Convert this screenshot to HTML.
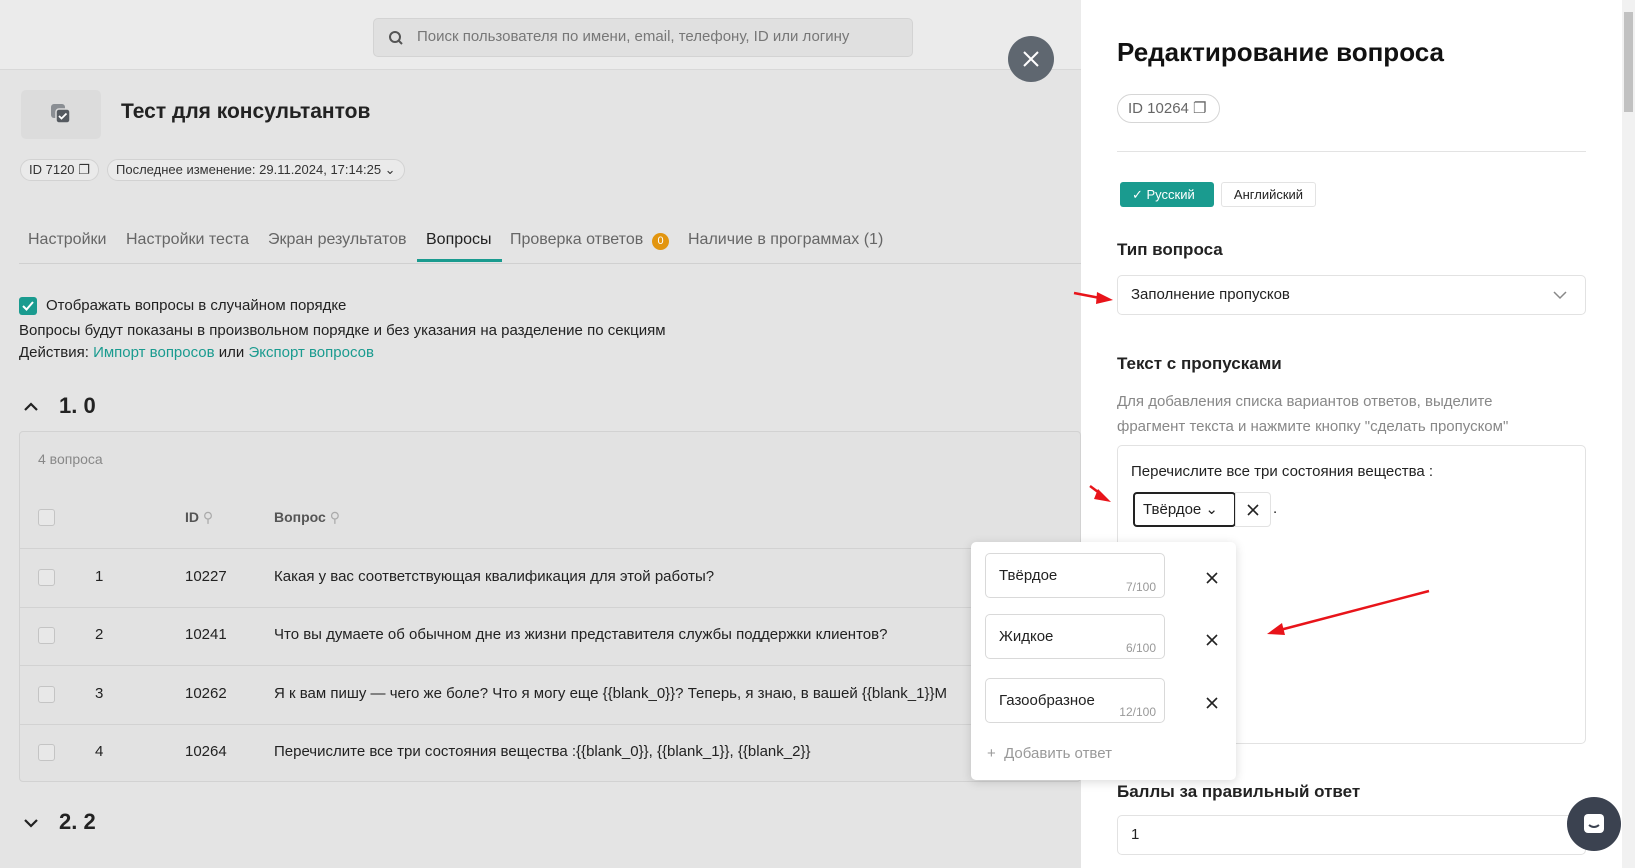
<!DOCTYPE html>
<html><head><meta charset="utf-8"><style>
*{box-sizing:border-box;margin:0;padding:0}
body{width:1635px;height:868px;overflow:hidden;position:relative;background:#e4e4e4;font-family:"Liberation Sans","DejaVu Sans",sans-serif;color:#222}
.a{position:absolute;white-space:nowrap}
.chip{position:absolute;border:1px solid #d2d2d2;border-radius:14px;background:#eaeaea;font-size:13px;color:#333;padding:0 8px;height:22px;line-height:20px}
.row{position:absolute;left:19px;width:1062px;height:58px;border-top:1px solid #d2d2d2}
.cb{position:absolute;width:17px;height:17px;border:1px solid #c4c4c4;border-radius:3px;background:#e8e8e8}
.rt{position:absolute;font-size:15px;color:#222}
.inp{position:absolute;left:985px;width:180px;height:45px;border:1px solid #d9d9d9;border-radius:5px;background:#fff}
.inp span{position:absolute;left:13px;top:13px;font-size:15px;color:#222}
.inp i{position:absolute;right:8px;bottom:3px;font-size:12px;color:#999;font-style:normal}
.x{position:absolute;font-size:18px;color:#222}
</style></head><body>
<!-- top bar -->
<div class="a" style="left:0;top:0;width:1081px;height:70px;background:#ebebeb;border-bottom:1px solid #d8d8d8"></div>
<div class="a" style="left:373px;top:18px;width:540px;height:39px;background:#e0e0e0;border:1px solid #d3d3d3;border-radius:5px"></div>
<svg class="a" style="left:388px;top:30px" width="16" height="16" viewBox="0 0 16 16"><circle cx="7" cy="7" r="5" fill="none" stroke="#555" stroke-width="2"/><path d="M11 11l3 3" stroke="#555" stroke-width="2"/></svg>
<div class="a" style="left:417px;top:28px;font-size:15px;color:#777">Поиск пользователя по имени, email, телефону, ID или логину</div>
<div class="a" style="left:1008px;top:36px;width:46px;height:46px;border-radius:50%;background:#5f6770"></div>
<svg class="a" style="left:1022px;top:50px" width="18" height="18" viewBox="0 0 18 18"><path d="M2 2l14 14M16 2L2 16" stroke="#fff" stroke-width="2"/></svg>
<!-- header -->
<div class="a" style="left:21px;top:90px;width:80px;height:49px;background:#dcdcdc;border-radius:5px"></div>
<svg class="a" style="left:49px;top:102px" width="24" height="24" viewBox="0 0 24 24"><rect x="2" y="2" width="14" height="14" rx="3" fill="#8a8e93"/><rect x="7" y="7" width="14" height="14" rx="3" fill="#555a60" stroke="#dcdcdc" stroke-width="1.5"/><path d="M10 14l2.5 2.5 5-5" stroke="#fff" stroke-width="1.8" fill="none"/></svg>
<div class="a" style="left:121px;top:100px;font-size:21px;font-weight:bold;color:#222">Тест для консультантов</div>
<div class="chip" style="left:20px;top:159px">ID 7120 ❐</div>
<div class="chip" style="left:107px;top:159px">Последнее изменение: 29.11.2024, 17:14:25 ⌄</div>
<!-- tabs -->
<div class="a" style="left:19px;top:263px;width:1062px;height:1px;background:#d0d0d0"></div>
<div class="a" style="left:28px;top:231px;font-size:16px;color:#666">Настройки</div>
<div class="a" style="left:126px;top:231px;font-size:16px;color:#666">Настройки теста</div>
<div class="a" style="left:268px;top:231px;font-size:16px;color:#666">Экран результатов</div>
<div class="a" style="left:426px;top:231px;font-size:16px;color:#222">Вопросы</div>
<div class="a" style="left:417px;top:259px;width:85px;height:3px;background:#1a9b8f"></div>
<div class="a" style="left:510px;top:231px;font-size:16px;color:#666">Проверка ответов</div>
<div class="a" style="left:652px;top:233px;width:17px;height:17px;border-radius:50%;background:#e2950f;color:#fff;font-size:11px;text-align:center;line-height:17px">0</div>
<div class="a" style="left:688px;top:231px;font-size:16px;color:#666">Наличие в программах (1)</div>
<!-- options -->
<div class="a" style="left:19px;top:297px;width:18px;height:18px;border-radius:3px;background:#1a9b8f"></div>
<svg class="a" style="left:21px;top:299px" width="14" height="14" viewBox="0 0 14 14"><path d="M2 7l3.5 3.5L12 3" stroke="#fff" stroke-width="2" fill="none"/></svg>
<div class="a" style="left:46px;top:297px;font-size:15px">Отображать вопросы в случайном порядке</div>
<div class="a" style="left:19px;top:322px;font-size:15px">Вопросы будут показаны в произвольном порядке и без указания на разделение по секциям</div>
<div class="a" style="left:19px;top:344px;font-size:15px">Действия: <span style="color:#1a9b8f">Импорт вопросов</span> или <span style="color:#1a9b8f">Экспорт вопросов</span></div>
<svg class="a" style="left:23px;top:400px" width="16" height="12" viewBox="0 0 16 12"><path d="M2 10l6-6 6 6" stroke="#222" stroke-width="2.2" fill="none"/></svg>
<div class="a" style="left:59px;top:393px;font-size:22px;font-weight:bold">1. 0</div>
<!-- table -->
<div class="a" style="left:19px;top:431px;width:1062px;height:351px;border:1px solid #d2d2d2;border-radius:4px;background:#e2e2e2"></div>
<div class="a" style="left:38px;top:451px;font-size:14px;color:#888">4 вопроса</div>
<div class="cb" style="left:38px;top:509px"></div>
<div class="a" style="left:185px;top:509px;font-size:14px;font-weight:bold;color:#555">ID <span style="color:#aaa;font-weight:normal">⚲</span></div>
<div class="a" style="left:274px;top:509px;font-size:14px;font-weight:bold;color:#555">Вопрос <span style="color:#aaa;font-weight:normal">⚲</span></div>
<div class="row" style="top:548px"></div><div class="row" style="top:607px"></div><div class="row" style="top:665px"></div><div class="row" style="top:724px;height:0"></div>
<div class="cb" style="left:38px;top:569px"></div><div class="rt" style="left:95px;top:568px">1</div><div class="rt" style="left:185px;top:568px">10227</div><div class="rt" style="left:274px;top:568px">Какая у вас соответствующая квалификация для этой работы?</div>
<div class="cb" style="left:38px;top:627px"></div><div class="rt" style="left:95px;top:626px">2</div><div class="rt" style="left:185px;top:626px">10241</div><div class="rt" style="left:274px;top:626px">Что вы думаете об обычном дне из жизни представителя службы поддержки клиентов?</div>
<div class="cb" style="left:38px;top:686px"></div><div class="rt" style="left:95px;top:685px">3</div><div class="rt" style="left:185px;top:685px">10262</div><div class="rt" style="left:274px;top:685px">Я к вам пишу — чего же боле? Что я могу еще {{blank_0}}? Теперь, я знаю, в вашей {{blank_1}}М</div>
<div class="cb" style="left:38px;top:744px"></div><div class="rt" style="left:95px;top:743px">4</div><div class="rt" style="left:185px;top:743px">10264</div><div class="rt" style="left:274px;top:743px">Перечислите все три состояния вещества :{{blank_0}}, {{blank_1}}, {{blank_2}}</div>
<svg class="a" style="left:23px;top:818px" width="16" height="12" viewBox="0 0 16 12"><path d="M2 2l6 6 6-6" stroke="#222" stroke-width="2.2" fill="none"/></svg>
<div class="a" style="left:59px;top:809px;font-size:22px;font-weight:bold">2. 2</div>
<!-- right panel -->
<div class="a" style="left:1081px;top:0;width:541px;height:868px;background:#fff"></div>
<div class="a" style="left:1622px;top:0;width:13px;height:868px;background:#f1f1f1"></div>
<div class="a" style="left:1624px;top:12px;width:9px;height:100px;background:#c1c1c1"></div>
<div class="a" style="left:1117px;top:37px;font-size:26px;font-weight:bold;color:#111">Редактирование вопроса</div>
<div class="a" style="left:1117px;top:94px;width:103px;height:29px;border:1px solid #d6d6d6;border-radius:15px;font-size:15px;color:#666;line-height:27px;padding-left:10px">ID 10264 ❐</div>
<div class="a" style="left:1117px;top:151px;width:469px;height:1px;background:#e3e3e3"></div>
<div class="a" style="left:1120px;top:182px;width:94px;height:25px;background:#1a9b8f;border-radius:3px;color:#fff;font-size:13px;line-height:25px;padding-left:12px">✓ Русский</div>
<div class="a" style="left:1221px;top:182px;width:95px;height:25px;border:1px solid #e3e3e3;border-radius:3px;color:#222;font-size:13px;line-height:23px;text-align:center">Английский</div>
<div class="a" style="left:1117px;top:240px;font-size:17px;font-weight:bold;color:#222">Тип вопроса</div>
<div class="a" style="left:1117px;top:275px;width:469px;height:40px;border:1px solid #e2e2e2;border-radius:5px"></div>
<div class="a" style="left:1131px;top:286px;font-size:15px">Заполнение пропусков</div>
<svg class="a" style="left:1553px;top:290px" width="14" height="10" viewBox="0 0 14 10"><path d="M1 2l6 6 6-6" stroke="#888" stroke-width="1.5" fill="none"/></svg>
<div class="a" style="left:1117px;top:354px;font-size:17px;font-weight:bold;color:#222">Текст с пропусками</div>
<div class="a" style="left:1117px;top:389px;font-size:15px;color:#888;line-height:25px">Для добавления списка вариантов ответов, выделите<br>фрагмент текста и нажмите кнопку "сделать пропуском"</div>
<div class="a" style="left:1117px;top:445px;width:469px;height:299px;border:1px solid #e2e2e2;border-radius:5px"></div>
<div class="a" style="left:1131px;top:463px;font-size:15px">Перечислите все три состояния вещества :</div>
<div class="a" style="left:1133px;top:492px;width:103px;height:35px;border:2px solid #222;border-radius:4px;font-size:15px;line-height:31px;padding-left:8px">Твёрдое ⌄</div>
<div class="a" style="left:1235px;top:492px;width:36px;height:35px;border:1px solid #e2e2e2;border-radius:0 4px 4px 0"></div>
<svg class="a" style="left:1247px;top:504px" width="12" height="12" viewBox="0 0 12 12"><path d="M1 1l10 10M11 1L1 11" stroke="#222" stroke-width="1.6"/></svg>
<div class="a" style="left:1273px;top:500px;font-size:15px">.</div>
<div class="a" style="left:1117px;top:782px;font-size:17px;font-weight:bold;color:#222">Баллы за правильный ответ</div>
<div class="a" style="left:1117px;top:815px;width:469px;height:40px;border:1px solid #e2e2e2;border-radius:5px"></div>
<div class="a" style="left:1131px;top:826px;font-size:15px">1</div>
<div class="a" style="left:1567px;top:797px;width:54px;height:54px;border-radius:50%;background:#3b4250"></div>
<svg class="a" style="left:1581px;top:811px" width="26" height="26" viewBox="0 0 26 26"><rect x="3" y="3" width="20" height="19" rx="4" fill="#fff"/><path d="M8 14q5 4 10 0" stroke="#3b4250" stroke-width="2" fill="none"/></svg>
<!-- popup -->
<div class="a" style="left:971px;top:542px;width:265px;height:238px;background:#fff;border-radius:5px;box-shadow:0 2px 10px rgba(0,0,0,.15)"></div>
<div class="inp" style="top:553px"><span>Твёрдое</span><i>7/100</i></div>
<div class="inp" style="top:614px"><span>Жидкое</span><i>6/100</i></div>
<div class="inp" style="top:678px"><span>Газообразное</span><i>12/100</i></div>
<svg class="a" style="left:1206px;top:572px" width="12" height="12" viewBox="0 0 12 12"><path d="M1 1l10 10M11 1L1 11" stroke="#222" stroke-width="1.6"/></svg>
<svg class="a" style="left:1206px;top:634px" width="12" height="12" viewBox="0 0 12 12"><path d="M1 1l10 10M11 1L1 11" stroke="#222" stroke-width="1.6"/></svg>
<svg class="a" style="left:1206px;top:697px" width="12" height="12" viewBox="0 0 12 12"><path d="M1 1l10 10M11 1L1 11" stroke="#222" stroke-width="1.6"/></svg>
<div class="a" style="left:987px;top:745px;font-size:15px;color:#999">+&nbsp; Добавить ответ</div>
<!-- arrows -->
<svg class="a" style="left:0;top:0" width="1635" height="868"><g stroke="#e8141a" stroke-width="2.5" fill="#e8141a">
<line x1="1074" y1="293" x2="1100" y2="298"/><polygon points="1113,300 1097,292 1096,304" stroke="none"/>
<line x1="1090" y1="486" x2="1102" y2="495"/><polygon points="1111,502 1098,489 1094,499" stroke="none"/>
<line x1="1429" y1="591" x2="1280" y2="630"/><polygon points="1267,634 1282,623 1285,635" stroke="none"/></g></svg>
</body></html>
